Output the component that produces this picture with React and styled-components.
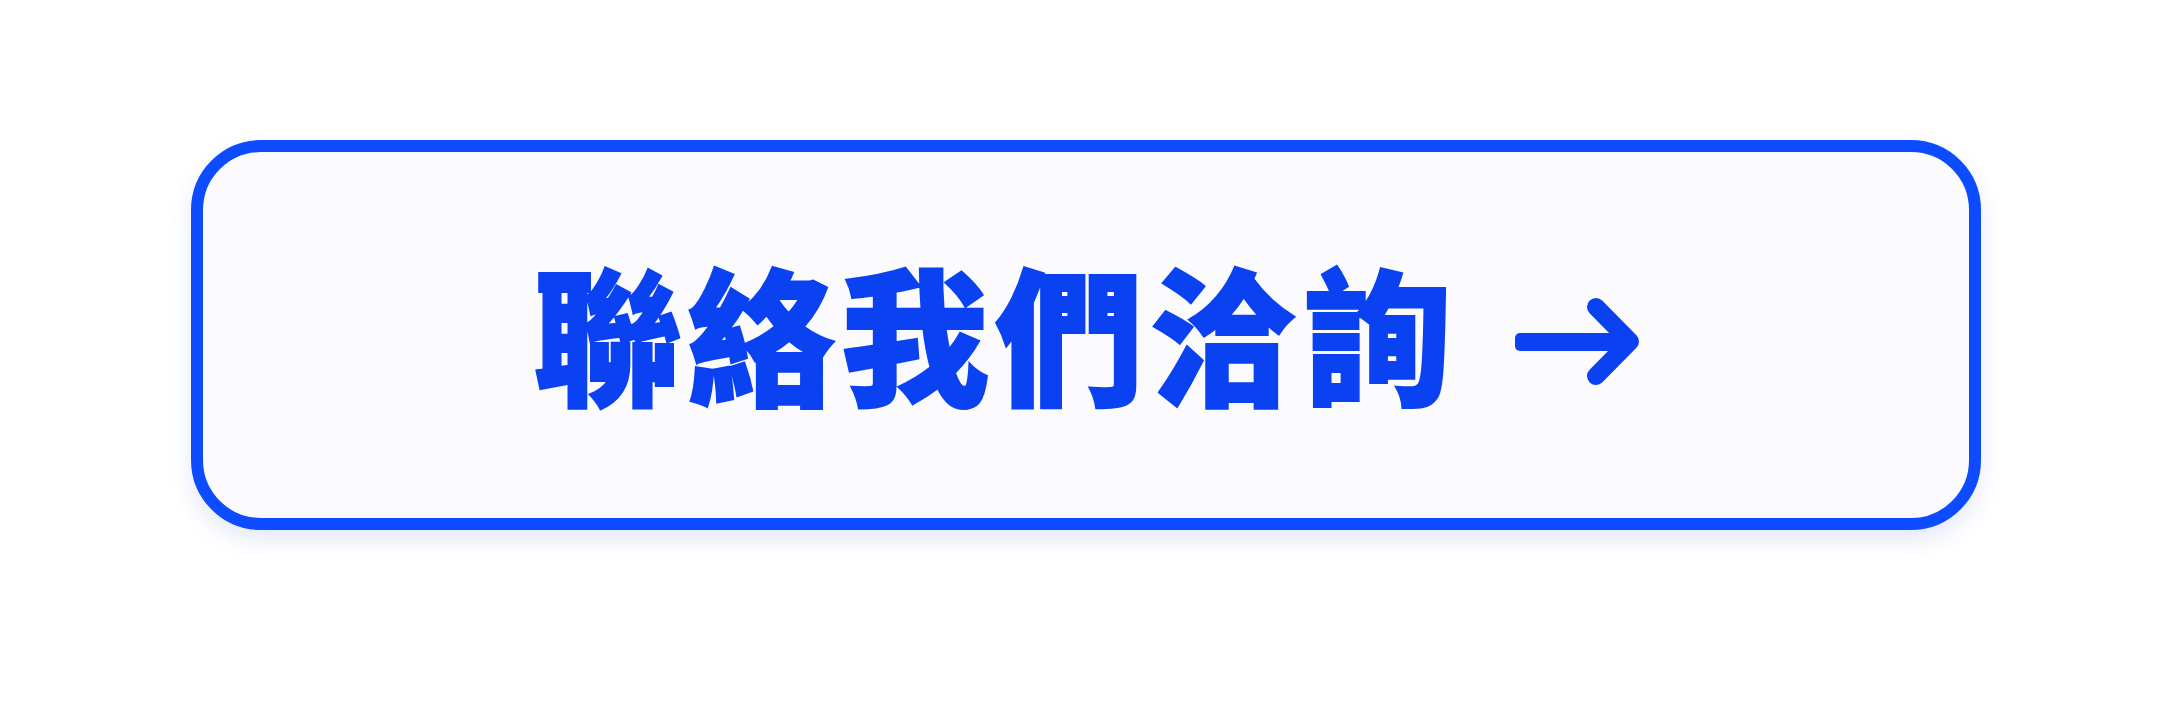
import React from "react";
import styled, { createGlobalStyle } from "styled-components";

const GlobalStyle = createGlobalStyle`
  html, body {
    margin: 0;
    padding: 0;
    background: #ffffff;
  }
  body {
    font-family: "Noto Sans CJK TC", "Noto Sans", sans-serif;
  }
`;

const Page = styled.div`
  width: 2172px;
  height: 724px;
  box-sizing: border-box;
  padding-top: 140px;
  display: flex;
  justify-content: center;
  align-items: flex-start;
  background: #ffffff;
`;

const ContactButton = styled.button`
  box-sizing: border-box;
  width: 1790px;
  height: 390px;
  border: 12px solid #0d4bff;
  border-radius: 70px;
  background: #fbfbfd;
  box-shadow: 0 10px 22px rgba(40, 70, 200, 0.12);
  display: flex;
  align-items: center;
  justify-content: center;
  gap: 58px;
  padding: 0;
  cursor: pointer;
`;

const Label = styled.span`
  font-family: "Noto Sans CJK TC", "Noto Sans CJK SC", sans-serif;
  font-weight: 900;
  font-size: 148px;
  line-height: 1;
  color: #0a42f2;
  -webkit-text-stroke: 2px #0a42f2;
  letter-spacing: 6px;
  white-space: nowrap;
  margin-top: -10px;
`;

/* right arrow: flat shaft with softened ends, round-capped head */
const ArrowIcon = ({ className }) => (
  <svg className={className} viewBox="0 0 124 87" fill="none">
    <rect x="0" y="35" width="112" height="18" rx="5" fill="#0a42f2" />
    <polyline
      points="81,9 115,43.5 81,78"
      stroke="#0a42f2"
      strokeWidth="18"
      strokeLinecap="round"
      strokeLinejoin="round"
    />
  </svg>
);

const Arrow = styled(ArrowIcon)`
  flex: 0 0 124px;
  width: 124px;
  height: 87px;
  display: block;
  margin-top: 12px;
`;

export default function App() {
  return (
    <>
      <GlobalStyle />
      <Page>
        <ContactButton type="button">
          <Label>聯絡我們洽詢</Label>
          <Arrow />
        </ContactButton>
      </Page>
    </>
  );
}
